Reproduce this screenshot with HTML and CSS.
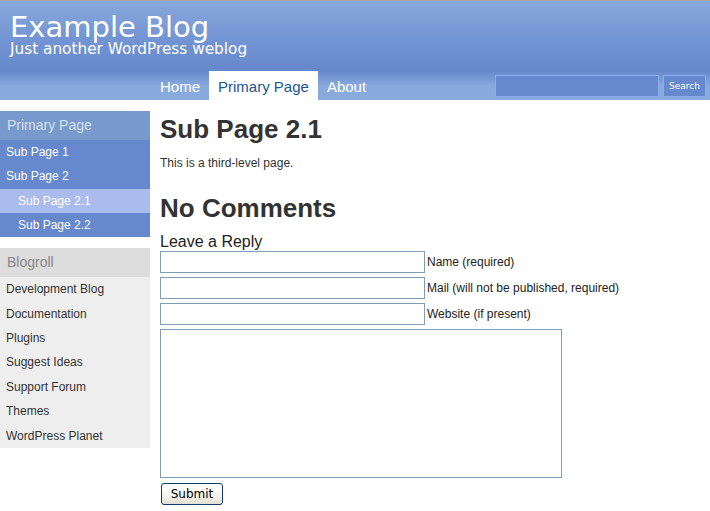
FILE: index.html
```html
<!DOCTYPE html>
<html>
<head>
<meta charset="utf-8">
<title>Example Blog &raquo; Sub Page 2.1</title>
<link rel="stylesheet" href="styles.css">
</head>
<body>
<div class="header">
<div class="blog-title">Example Blog</div>
<div class="blog-desc">Just another WordPress weblog</div>
</div>

<div class="navbar">
<ul class="tabs">
<li><a href="#">Home</a></li>
<li class="current"><a href="#">Primary Page</a></li>
<li><a href="#">About</a></li>
</ul>
<form class="search" action="#">
<input type="text" class="search-box">
<input type="submit" class="search-btn" value="Search">
</form>
</div>

<div class="page">
<div class="sidebar">
<div class="menu pages">
<div class="menu-title">Primary Page</div>
<ul>
<li><a href="#">Sub Page 1</a></li>
<li><a href="#">Sub Page 2</a></li>
<li class="sub current"><a href="#">Sub Page 2.1</a></li>
<li class="sub"><a href="#">Sub Page 2.2</a></li>
</ul>
</div>

<div class="menu links">
<div class="menu-title">Blogroll</div>
<ul>
<li><a href="#">Development Blog</a></li>
<li><a href="#">Documentation</a></li>
<li><a href="#">Plugins</a></li>
<li><a href="#">Suggest Ideas</a></li>
<li><a href="#">Support Forum</a></li>
<li><a href="#">Themes</a></li>
<li><a href="#">WordPress Planet</a></li>
</ul>
</div>
</div>

<div class="content">
<h2 class="post-title">Sub Page 2.1</h2>
<p>This is a third-level page.</p>

<h3 class="comments">No Comments</h3>
<h4 class="reply">Leave a Reply</h4>
<form class="comment-form" action="#">
<div class="row"><input type="text" class="field"><label>Name (required)</label></div>
<div class="row"><input type="text" class="field"><label>Mail (will not be published, required)</label></div>
<div class="row"><input type="text" class="field"><label>Website (if present)</label></div>
<textarea class="comment-box"></textarea>
<div><input type="submit" class="submit" value="Submit"></div>
</form>
</div>
</div>
</body>
</html>
```

FILE: styles.css
```css
/* Example Blog - blue theme
*/

body
{ margin: 0;
background-color: white;
color: #333;
font-family: "Liberation Sans", Arial, sans-serif;
font-size: 12px;
}

a
{ text-decoration: none;
}

ul
{ list-style: none;
margin: 0;
padding: 0;
}

/* Header */

div.header
{ border-top: 1px solid #a8a8a0;
padding: 11px 0 0 10px;
height: 59px;
background: linear-gradient(#88a8dd, #7596d4 50%, #6688cc);
color: white;
font-family: "DejaVu Sans", Verdana, sans-serif;
}

div.blog-title
{ font-size: 29px;
line-height: 30px;
}

div.blog-desc
{ font-size: 15.3px;
line-height: 14px;
}

/* Navigation bar */

div.navbar
{ display: flex;
justify-content: space-between;
align-items: center;
height: 29px;
padding-left: 151px;
background: linear-gradient(#6688cc, #88aadd 50%, #88aadd);
}

ul.tabs
{ display: flex;
align-self: stretch;
}

ul.tabs li a
{ display: block;
padding: 2px 9px 0 9px;
line-height: 27px;
font-size: 15px;
color: white;
}

ul.tabs li.current a
{ background-color: white;
color: #1a5599;
}

form.search
{ display: flex;
gap: 4px;
margin-right: 4px;
}

input.search-box
{ box-sizing: border-box;
width: 164px;
height: 22px;
margin: 0;
background-color: #6688cc;
border: 1px solid #8cacee;
}

input.search-btn
{ box-sizing: border-box;
width: 43px;
height: 22px;
margin: 0;
padding: 0;
background-color: #6688cc;
border: 1px solid #8cacee;
color: white;
font-family: "DejaVu Sans", Verdana, sans-serif;
font-size: 9px;
}

/* Page columns */

div.page
{ display: flex;
align-items: flex-start;
padding-top: 11px;
}

div.sidebar
{ width: 150px;
flex-shrink: 0;
display: flex;
flex-direction: column;
gap: 11px;
}

div.menu-title
{ height: 29px;
line-height: 29px;
padding-left: 7px;
font-size: 14px;
}

div.menu li a
{ display: block;
padding-left: 6px;
}

div.pages .menu-title
{ background-color: #7799cc;
color: #d8e0ee;
}

div.pages li a
{ line-height: 24.3px;
background-color: #6688cc;
color: white;
}

div.pages li.sub a
{ padding-left: 18px;
}

div.pages li.current a
{ background-color: #aabbee;
}

div.links .menu-title
{ background-color: #dddddd;
color: #888;
}

div.links li a
{ line-height: 24.4px;
background-color: #eeeeee;
color: #333;
}

/* Content */

div.content
{ margin-left: 10px;
}

h2.post-title
{ margin: 3px 0 0 0;
font-size: 26px;
line-height: 30px;
}

div.content p
{ margin: 12px 0 0 0;
line-height: 14px;
}

h3.comments
{ margin: 23px 0 0 0;
font-size: 26px;
line-height: 30px;
}

h4.reply
{ margin: 10px 0 0 0;
font-size: 16px;
font-weight: normal;
line-height: 18px;
color: #222;
}

div.row
{ display: flex;
align-items: center;
gap: 2px;
margin-bottom: 4px;
}

input.field
{ box-sizing: border-box;
width: 265px;
height: 22px;
margin: 0;
border: 1px solid #7f9db9;
}

div.row label
{ color: #222;
}

textarea.comment-box
{ display: block;
box-sizing: border-box;
width: 402px;
height: 149px;
margin: 0;
border: 1px solid #7f9db9;
resize: none;
}

input.submit
{ margin: 5px 0 0 1px;
width: 62px;
height: 22px;
padding: 0;
border: 1px solid #0f3c6e;
border-radius: 3px;
background: linear-gradient(#ffffff, #f4f3ee 60%, #e2ded0);
font-family: "DejaVu Sans", Tahoma, sans-serif;
font-size: 12px;
color: black;
}
```
